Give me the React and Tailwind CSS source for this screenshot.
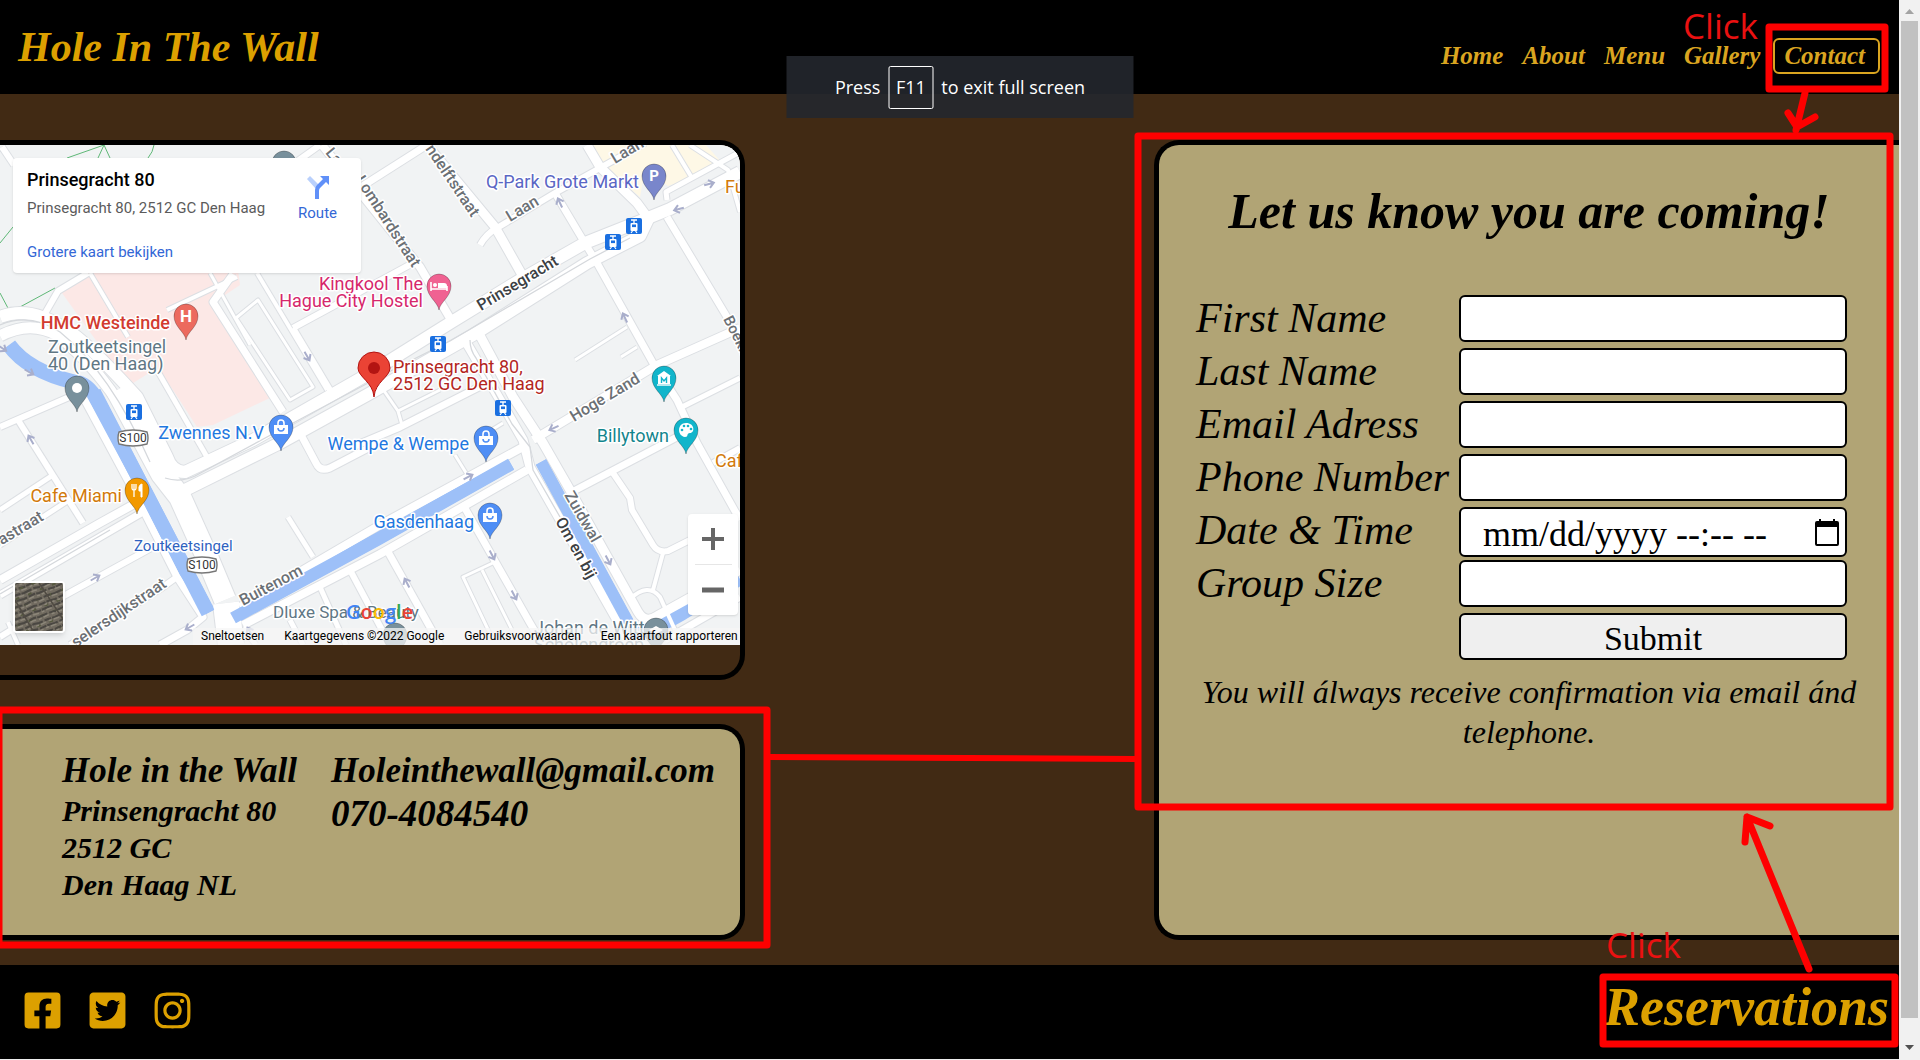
import React from "react";
import { FaFacebookSquare, FaTwitterSquare, FaInstagram } from "react-icons/fa";

const serif = "font-['Liberation_Serif',serif]";

/* ---------- map data ---------- */

const minorRoads = [
  ["M2 147 L14 165", 6],
  ["M0 427 L83 391", 6],
  ["M18 420 L83 523", 6],
  ["M0 510 L53 475", 5],
  ["M0 545 L69 500", 5],
  ["M0 580 L100 523 L138 502", 8],
  ["M0 595 L100 537 L143 512", 7],
  ["M40 609 L153 547", 6],
  ["M0 637 L24 622", 6],
  ["M8 622 L18 645", 4],
  ["M70 645 L163 587 L177 577", 6],
  ["M83 397 L133 490 L177 577 L203 617 L187 630 L160 645", 7],
  ["M43 317 L58 291 L88 273", 6],
  ["M90 273 L128 337", 4],
  ["M167 310 L237 277", 4],
  ["M233 274 L213 302 L283 412", 7],
  ["M157 370 L207 457", 5],
  ["M236 318 L258 300 L313 387 L290 400 L236 318", 3],
  ["M210 273 L250 345", 3],
  ["M257 273 L327 390", 4],
  ["M293 328 L413 263", 6],
  ["M293 328 L330 390", 6],
  ["M285 170 L320 145", 6],
  ["M322 145 L420 267 L454 325", 8],
  ["M361 187 L427 145", 7],
  ["M427 145 L495 227 L525 280", 9],
  ["M480 245 Q486 234 497 228 L555 193 L645 143", 6],
  ["M587 145 L600 167 L637 203 L648 218", 9],
  ["M555 193 L583 240 L597 263 L653 363 L677 400 L697 443 L740 520", 7],
  ["M667 217 L727 317 L740 340", 7],
  ["M667 200 L666 192 L740 152", 5],
  ["M672 145 L692 178", 4],
  ["M690 145 L728 170 L740 212", 4],
  ["M740 328 L657 365 L533 440", 8],
  ["M680 408 L740 378", 5],
  ["M570 493 L677 437", 7],
  ["M713 463 L740 448", 6],
  ["M613 473 L630 498 L632 510 L653 545 Q658 553 668 551 L740 515", 6],
  ["M663 553 L653 590 M630 599 Q648 582 660 597 L675 630", 4],
  ["M575 360 L627 327 M621 357 L637 347", 3],
  ["M300 433 L316 463 Q320 472 330 468 L380 442", 7],
  ["M350 448 L400 427 L483 385", 7],
  ["M402 425 L398 411 L380 385 M398 411 L440 390", 3],
  ["M455 455 L468 476 M480 437 L503 423", 3],
  ["M240 607 L380 525 L523 447", 8],
  ["M243 625 L380 554 L527 470", 8],
  ["M462 503 L530 623 L543 645", 7],
  ["M387 550 L440 645", 7],
  ["M288 517 L313 557", 5],
  ["M320 587 L346 645", 5],
  ["M350 570 L390 645", 6],
  ["M290 620 L303 645 M243 628 L256 645", 5],
  ["M493 640 L463 577 L495 562 M482 570 L512 630", 3],
  ["M665 640 L740 597", 7],
];

const mainRoads = [
  ["M0 317 Q30 305 67 330 Q85 340 137 397 L167 457 Q172 472 185 472 L253 440 L370 373 L450 323 L520 280 L585 243 L643 220 L670 209 L740 172", 12],
  ["M0 336 Q30 320 57 335 Q90 360 117 400 L160 475", 11],
  ["M117 390 L162 474 L180 497 L207 557 L225 600", 22],
  ["M175 495 L280 443 L367 395 L473 335 L587 263 L640 236 L650 215", 12],
  ["M463 337 L500 400 L523 440 L530 467 L617 620 L630 645", 9],
  ["M477 330 L513 397 L543 443 L570 490 L638 612 Q645 624 657 616 L740 570", 9],
  ["M226 603 L231 645", 26],
];

const medianLines = [
  "M165 478 Q180 483 195 476 L280 430 L400 366 L450 341 L590 259 L630 238",
  "M470 340 Q470 350 476 358 L512 424 L530 447 L533 470 L560 517",
  "M110 530 L0 594",
  "M0 325 Q30 312 60 332 Q110 372 150 462",
];

const streetLabels = [
  ["La", 325, 153, 50, 15],
  ["Lombardstraat", 355, 180, 57, 16],
  ["ndelftstraat", 425, 149, 56, 16],
  ["Laan", 510, 222, -31, 16],
  ["Laan", 615, 164, -31, 16],
  ["Prinsegracht", 481, 311, -31, 16, "#3c4043"],
  ["Hoge Zand", 574, 422, -31, 16],
  ["Boekh", 723, 319, 63, 15],
  ["Zuidwal", 564, 495, 60, 16],
  ["Om en bij", 555, 521, 61, 16, "#3c4043"],
  ["Buitenom", 243, 606, -28, 16],
  ["pastraat", -6, 550, -31, 16],
  ["selersdijkstraat", 76, 648, -34, 16],
];

const poiLabels = [
  ["Q-Park Grote Markt", 639, 188, "end", "#5a66c4", 18],
  ["Fu", 725, 193, "start", "#d27a0b", 18],
  ["Kingkool The", 423, 290, "end", "#d6276c", 18],
  ["Hague City Hostel", 423, 307, "end", "#d6276c", 18],
  ["HMC Westeinde", 170, 329, "end", "#d23b30", 18, 500],
  ["Zoutkeetsingel", 48, 353, "start", "#5f7784", 18],
  ["40 (Den Haag)", 48, 370, "start", "#5f7784", 18],
  ["Prinsegracht 80,", 393, 373, "start", "#b3261e", 18],
  ["2512 GC Den Haag", 393, 390, "start", "#b3261e", 18],
  ["Zwennes N.V", 264, 439, "end", "#1f78e0", 18],
  ["Wempe & Wempe", 469, 450, "end", "#1f78e0", 18],
  ["Gasdenhaag", 474, 528, "end", "#1f78e0", 18],
  ["Billytown", 669, 442, "end", "#12858d", 18],
  ["Caf", 715, 467, "start", "#d27a0b", 18],
  ["Cafe Miami", 122, 502, "end", "#d27a0b", 18],
  ["Zoutkeetsingel", 134, 551, "start", "#2f62c0", 15],
  ["Dluxe Spa & Beauty", 273, 618, "start", "#5f7784", 17],
  ["Johan de Witt", 534, 634, "start", "#5f7784", 18],
  ["Scholengroep", 534, 651, "start", "#5f7784", 18],
];

function Pin({ x, y, fill, children }) {
  return (
    <g transform={`translate(${x} ${y})`}>
      <path
        d="M0 24 C-1 16 -12 11 -12 0 A12 12 0 0 1 12 0 C12 11 1 16 0 24Z"
        fill={fill}
        stroke="#00000040"
        strokeWidth="1"
      />
      {children}
    </g>
  );
}

function Bag() {
  return (
    <g>
      <path d="M-7 -2h14v9h-14z" fill="#fff" />
      <path d="M-3 -2v-2a3 3 0 0 1 6 0v2" fill="none" stroke="#fff" strokeWidth="1.6" />
      <path d="M-3 1a3 3 0 0 0 6 0" fill="none" stroke="#4f8ef5" strokeWidth="1.5" />
    </g>
  );
}

function Tram({ x, y }) {
  return (
    <g transform={`translate(${x} ${y})`}>
      <rect x="-8" y="-8" width="16" height="16" rx="2" fill="#1a6fe0" />
      <path d="M-3 -6h6M0 -6v3" stroke="#fff" strokeWidth="1.3" />
      <rect x="-3.5" y="-3" width="7" height="8" rx="1" fill="#fff" />
      <rect x="-2" y="-1.5" width="4" height="2.6" fill="#1a6fe0" />
      <path d="M-3 7l1.5-2M3 7l-1.5-2" stroke="#fff" strokeWidth="1.2" />
    </g>
  );
}

function Shield({ x, y }) {
  return (
    <g transform={`translate(${x} ${y})`}>
      <path d="M-14 -6 Q0 -10 14 -6 Q16 0 14 6 Q0 10 -14 6 Q-16 0 -14 -6Z" fill="#fff" stroke="#777" strokeWidth="1.4" />
      <text y="4" textAnchor="middle" fontSize="12" fill="#333">S100</text>
    </g>
  );
}

function Arrow({ x, y, r }) {
  return (
    <path
      d="M-5 0H4M0 -4L5 0L0 4"
      fill="none"
      stroke="#a9aecb"
      strokeWidth="2"
      transform={`translate(${x} ${y}) rotate(${r})`}
    />
  );
}

function MapDrawing() {
  return (
    <svg
      viewBox="0 145 740 500"
      preserveAspectRatio="xMinYMin slice"
      className="block h-full w-full font-[Roboto,sans-serif]"
      role="img"
      aria-label="Prinsegracht 80, Den Haag"
    >
      <rect x="0" y="145" width="740" height="500" fill="#f1f3f4" />
      <path d="M592 145H706L722 163L690 178L668 186L645 170L640 197L600 163Z" fill="#fef8e6" />
      <path d="M88 270H238L240 285L213 303L270 393L272 397L213 425L197 427L173 390L157 368L130 385L110 360L62 293Z" fill="#fce8e6" />
      <g fill="none" stroke="#5fb877" strokeWidth="1">
        <path d="M67 158L104 145L98 158M104 145L110 158M154 145Q153 152 148 158M0 243L13 227M0 293L9 310L20 307L55 288" />
      </g>
      <g fill="none" strokeLinejoin="round">
        <g stroke="#dcdfe3">
          {minorRoads.map(([d, w]) => <path key={d} d={d} strokeWidth={w + 2} />)}
          {mainRoads.map(([d, w]) => <path key={d} d={d} strokeWidth={w + 2} />)}
        </g>
        <g stroke="#9dc0f8">
          <path d="M9 345Q28 371 74 382Q88 383 98 402L208 613" strokeWidth="15" />
          <path d="M233 618L378 539L511 464" strokeWidth="13" />
          <path d="M541 462L628 622" strokeWidth="12" />
          <path d="M628 632Q655 632 690 609L740 579" strokeWidth="13" />
        </g>
        <g stroke="#fff">
          {minorRoads.map(([d, w]) => <path key={d} d={d} strokeWidth={w} />)}
          {mainRoads.map(([d, w]) => <path key={d} d={d} strokeWidth={w} />)}
        </g>
        <path d="M233 618L378 539L511 464" stroke="#9dc0f8" strokeWidth="12" />
        <path d="M94 392L208 613" stroke="#9dc0f8" strokeWidth="14" />
        <path d="M541 462L628 622" stroke="#9dc0f8" strokeWidth="11" />
        <g stroke="#d5d8dc" strokeWidth="1.3">
          {medianLines.map((d) => <path key={d} d={d} />)}
        </g>
      </g>

      <Arrow x="31" y="440" r="-120" /><Arrow x="2" y="348" r="35" /><Arrow x="29" y="372" r="30" />
      <Arrow x="307" y="356" r="60" /><Arrow x="95" y="578" r="-30" /><Arrow x="190" y="627" r="150" />
      <Arrow x="250" y="632" r="-120" /><Arrow x="560" y="203" r="-115" /><Arrow x="625" y="318" r="-115" />
      <Arrow x="709" y="184" r="-15" /><Arrow x="679" y="209" r="165" /><Arrow x="554" y="428" r="155" />
      <Arrow x="468" y="477" r="-28" /><Arrow x="492" y="555" r="62" /><Arrow x="514" y="595" r="62" />
      <Arrow x="407" y="583" r="-118" /><Arrow x="608" y="560" r="62" />

      <Tram x="634" y="226" /><Tram x="613" y="242" /><Tram x="438" y="344" />
      <Tram x="503" y="408" /><Tram x="134" y="412" />
      <Shield x="133" y="438" /><Shield x="202" y="565" />

      <g stroke="#fff" strokeWidth="3" strokeLinejoin="round" paintOrder="stroke">
        {streetLabels.map(([t, x, y, r, s, c]) => (
          <text key={t + x} fontSize={s} fill={c || "#6b7075"} fontWeight="500" transform={`translate(${x} ${y}) rotate(${r})`}>{t}</text>
        ))}
        {poiLabels.map(([t, x, y, a, c, s, w]) => (
          <text key={t + y} x={x} y={y} textAnchor={a} fontSize={s} fill={c} fontWeight={w || 400}>{t}</text>
        ))}
      </g>

      <Pin x="284" y="163" fill="#78909c" />
      <Pin x="654" y="176" fill="#7986cb">
        <text y="5" textAnchor="middle" fontSize="15" fontWeight="700" fill="#fff">P</text>
      </Pin>
      <Pin x="439" y="286" fill="#f06292">
        <path d="M-8 -4v9M-8 3h16M8 5v-5" stroke="#fff" strokeWidth="1.6" />
        <path d="M-1 2v-5h6q3 0 3 3v2z" fill="#fff" />
        <circle cx="-4" cy="-1" r="2" fill="#fff" />
      </Pin>
      <Pin x="186" y="316" fill="#ec6a5e">
        <text y="6" textAnchor="middle" fontSize="17" fontWeight="700" fill="#fff">H</text>
      </Pin>
      <Pin x="77" y="388" fill="#78909c"><circle r="5" fill="#fff" /></Pin>
      <Pin x="281" y="427" fill="#4f8ef5"><Bag /></Pin>
      <Pin x="486" y="438" fill="#4f8ef5"><Bag /></Pin>
      <Pin x="490" y="515" fill="#4f8ef5"><Bag /></Pin>
      <Pin x="137" y="490" fill="#f29900">
        <path d="M-5 -6v4q0 2 2 2v7M-3 -6v6M-1 -6v4q0 2 -2 2" fill="none" stroke="#fff" strokeWidth="1.3" />
        <path d="M2 1v-4q1 -3 3 -3v13h-1v-6z" fill="#fff" stroke="#fff" />
      </Pin>
      <Pin x="664" y="378" fill="#12b5cb">
        <path d="M-7 -2L0 -7L7 -2ZM-6 -2h12v8h-12z" fill="#fff" />
        <path d="M-2.5 5v-5l2.5 3l2.5 -3v5" fill="none" stroke="#12b5cb" strokeWidth="1.4" />
        <path d="M-7 7h14" stroke="#fff" strokeWidth="1.4" />
      </Pin>
      <Pin x="686" y="430" fill="#12b5cb">
        <path d="M0 -7C9 -7 9 3 4 3C0 3 3 7 -1 7C-9 6 -9 -7 0 -7Z" fill="#fff" />
        <g fill="#12b5cb"><circle cx="-4" cy="0" r="1.3" /><circle cx="-2" cy="-4" r="1.3" /><circle cx="2" cy="-4" r="1.3" /><circle cx="5" cy="-1" r="1.3" /></g>
      </Pin>
      <Pin x="395" y="635" fill="#78909c" />
      <Pin x="656" y="630" fill="#78909c">
        <path d="M-7 0L0 -4L7 0L0 4Z" fill="#fff" />
      </Pin>

      <path d="M374 397C373 382 358 377 358 368A16 16 0 0 1 390 368C390 377 375 382 374 397Z" fill="#ea4335" stroke="#b31412" />
      <circle cx="374" cy="368" r="6" fill="#b31412" />
    </svg>
  );
}

function SatelliteThumb() {
  const rows = Array.from({ length: 13 }, (_, i) => i);
  return (
    <svg viewBox="0 0 48 48" className="block h-full w-full" aria-hidden="true">
      <rect width="48" height="48" fill="#716b60" />
      {rows.map((i) => (
        <g key={i} fill="none">
          <path d={`M-4 ${i * 6 + 2}l9 -3l4 -1l10 -5l5 -1l9 -4l7 -2l12 -6`} stroke="#4a4742" strokeWidth="2" strokeDasharray="11 2 7 1" strokeDashoffset={i * 5} />
          <path d={`M-4 ${i * 6 + 5}l8 -3l6 -2l8 -4l7 -2l8 -4l17 -6`} stroke="#8c8679" strokeWidth="1.5" strokeDasharray="6 3 3 2" strokeDashoffset={i * 3} />
          <path d={`M-4 ${i * 9}l16 -6l14 -6l26 -10`} stroke="#55583f" strokeWidth="2" strokeDasharray="4 9" strokeDashoffset={i * 4} />
        </g>
      ))}
      <path d="M0 17L18 48M24 0L48 36" stroke="#504b43" strokeWidth="1.5" />
    </svg>
  );
}

function MapPanel() {
  return (
    <div className="relative h-[500px] overflow-hidden rounded-tr-[20px] bg-[#f1f3f4] font-[Roboto,sans-serif]">
      <MapDrawing />

      <div className="absolute left-[13px] top-[13px] flex h-[115px] w-[348px] justify-between rounded-sm bg-white pl-[14px] pr-6 pt-3 shadow">
        <div className="flex flex-col items-start text-[15px] leading-5">
          <h2 className="text-[18px] font-medium leading-5 text-black">Prinsegracht 80</h2>
          <p className="mt-2 text-[#5b5b5b]">Prinsegracht 80, 2512 GC Den Haag</p>
          <a href="#kaart" className="mt-6 text-[#3367d6]">Grotere kaart bekijken</a>
        </div>
        <a href="#route" className="flex flex-col items-center pt-[5px] text-[15px] leading-5 text-[#3367d6]">
          <svg viewBox="0 0 24 24" className="mb-1 h-6 w-6" aria-hidden="true">
            <path d="M1 4L4 1L13 10L10 14Z" fill="#b9d0fc" />
            <path d="M9 24V15Q9 12 11 10L17 4L14 1H23V10L20 7L14 13Q13 14 13 16V24Z" fill="#6090f8" />
          </svg>
          Route
        </a>
      </div>

      <div className="absolute right-[2px] top-[369px] flex h-[101px] w-[50px] flex-col items-center rounded-sm bg-white shadow">
        <button type="button" aria-label="Inzoomen" className="flex w-full flex-1 items-center justify-center">
          <svg viewBox="0 0 22 22" className="h-[22px] w-[22px]"><path d="M0 11H22M11 0V22" stroke="#666" strokeWidth="4" /></svg>
        </button>
        <span className="h-px w-[37px] bg-[#e6e6e6]" />
        <button type="button" aria-label="Uitzoomen" className="flex w-full flex-1 items-center justify-center">
          <svg viewBox="0 0 22 22" className="h-[22px] w-[22px]"><path d="M0 11H22" stroke="#666" strokeWidth="5" /></svg>
        </button>
      </div>

      <button type="button" aria-label="Satelliet" className="absolute bottom-3 left-[13px] h-[52px] w-[52px] overflow-hidden rounded-sm border-2 border-white shadow-md">
        <SatelliteThumb />
      </button>

      <div className="absolute bottom-[19px] left-[346px] font-['Open_Sans',sans-serif] text-[20px] font-semibold leading-7" aria-label="Google">
        <span className="text-[#4285f4]">G</span><span className="text-[#ea4335]">o</span><span className="text-[#fbbc05]">o</span><span className="text-[#4285f4]">g</span><span className="text-[#34a853]">l</span><span className="text-[#ea4335]">e</span>
      </div>

      <div className="absolute bottom-0 right-0 flex h-[17px] w-[547px] gap-5 overflow-hidden whitespace-nowrap bg-[#f5f5f5]/75 pl-2 text-[12px] leading-[17px] text-black">
        <button type="button">Sneltoetsen</button>
        <span>Kaartgegevens ©2022 Google</span>
        <a href="#voorwaarden">Gebruiksvoorwaarden</a>
        <a href="#fout">Een kaartfout rapporteren</a>
      </div>
    </div>
  );
}

/* ---------- page parts ---------- */

function Header() {
  return (
    <header className="flex h-[94px] items-center justify-between bg-black pl-[18px] pr-[19px]">
      <h1 className="text-[42px] font-bold italic text-[#dca000]">Hole In The Wall</h1>
      <nav className="flex items-center gap-[19px] pt-[18px] text-[25px] font-bold italic leading-8 text-[#daa520]">
        <a href="#home">Home</a>
        <a href="#about">About</a>
        <a href="#menu">Menu</a>
        <a href="#gallery">Gallery</a>
        <a href="#contact" className="ml-[-6px] rounded-md border-2 border-[#daa520] pl-[9px] pr-[13px]">Contact</a>
      </nav>
    </header>
  );
}

const fieldBox = "rounded-[6px] border-2 border-black";

function Field({ id, label }) {
  return (
    <div className="flex h-[53px] justify-between">
      <label htmlFor={id} className="text-[42px] italic leading-[47px]">{label}</label>
      <input id={id} type="text" className={`${fieldBox} h-[47px] w-[388px] bg-white px-5 text-[35px]`} />
    </div>
  );
}

function DateField({ id, label }) {
  return (
    <div className="flex h-[53px] justify-between">
      <label htmlFor={id} className="text-[42px] italic leading-[47px]">{label}</label>
      <div className={`${fieldBox} flex h-[50px] w-[388px] items-center bg-white pl-[22px] pr-[6px]`}>
        <input
          id={id}
          type="text"
          placeholder="mm/dd/yyyy --:-- --"
          className="h-full min-w-0 flex-1 bg-transparent pt-1 text-[36px] placeholder:text-black placeholder:opacity-100"
        />
        <button type="button" aria-label="Pick a date" className="shrink-0">
          <svg viewBox="0 0 24 27" className="h-[27px] w-6" aria-hidden="true">
            <path d="M4 0H6V2H18V0H20V2H22Q24 2 24 4V25Q24 27 22 27H2Q0 27 0 25V4Q0 2 2 2H4ZM2 8V25H22V8Z" fill="#000" fillRule="evenodd" />
          </svg>
        </button>
      </div>
    </div>
  );
}

function ReservationForm() {
  return (
    <form className="w-[745px] rounded-l-[25px] border-[5px] border-r-0 border-black bg-[#b1a475] pt-9 text-black">
      <h2 className="text-center text-[50px] font-bold italic leading-[60px]">Let us know you are coming!</h2>
      <div className="mt-[54px] pl-[37px] pr-[52px]">
        <Field id="first" label="First Name" />
        <Field id="last" label="Last Name" />
        <Field id="email" label="Email Adress" />
        <Field id="phone" label="Phone Number" />
        <DateField id="date" label="Date & Time" />
        <Field id="size" label="Group Size" />
        <div className="flex justify-end">
          <button type="submit" className={`${fieldBox} h-[47px] w-[388px] bg-[#efefef] pt-1 text-[34px] leading-[39px]`}>Submit</button>
        </div>
      </div>
      <p className="mt-3 text-center text-[32px] italic leading-10">
        You will álways receive confirmation via email ánd telephone.
      </p>
    </form>
  );
}

function AddressCard() {
  return (
    <address className="flex h-[216px] gap-[34px] rounded-r-[25px] border-[5px] border-l-0 border-black bg-[#b1a475] pl-[62px] pt-5 font-bold italic text-black">
      <div className="text-[30px] leading-[37px]">
        <p className="text-[35px] leading-[43px]">Hole in the Wall</p>
        <p>Prinsengracht 80</p>
        <p>2512 GC</p>
        <p>Den Haag NL</p>
      </div>
      <div className="leading-[43px]">
        <p className="text-[35px]">Holeinthewall@gmail.com</p>
        <p className="text-[37px]">070-4084540</p>
      </div>
    </address>
  );
}

function Footer() {
  return (
    <footer className="flex h-[94px] items-center justify-between bg-black pl-[22px] pr-[10px] text-[#dca000]">
      <div className="flex gap-6 pb-1 text-[41px]">
        <a href="#facebook" aria-label="Facebook"><FaFacebookSquare /></a>
        <a href="#twitter" aria-label="Twitter"><FaTwitterSquare /></a>
        <a href="#instagram" aria-label="Instagram"><FaInstagram /></a>
      </div>
      <a href="#reservations" className="pb-[10px] text-[54px] font-bold italic leading-[60px]">Reservations</a>
    </footer>
  );
}

function PageScrollbar() {
  return (
    <div className="flex w-[21px] shrink-0 flex-col items-center bg-[#f1f1f1]" aria-hidden="true">
      <svg viewBox="0 0 21 21" className="h-[21px] w-[21px]"><path d="M6 14L10.5 9L15 14Z" fill="#a3a3a3" /></svg>
      <div className="w-[17px] flex-1 bg-[#c1c1c1]" />
      <svg viewBox="0 0 21 42" className="h-[42px] w-[21px]"><path d="M6 27L10.5 32L15 27Z" fill="#505050" /></svg>
    </div>
  );
}

function FullScreenNotice() {
  return (
    <div className="absolute left-1/2 top-14 flex h-[62px] w-[347px] -translate-x-1/2 items-center justify-center gap-2 bg-[#24272e]/90 font-['Open_Sans',sans-serif] text-[18px] text-white">
      <span>Press</span>
      <kbd className="flex h-[43px] w-[45px] items-center justify-center rounded-xs border border-white font-['Open_Sans',sans-serif] text-[18px]">F11</kbd>
      <span>to exit full screen</span>
    </div>
  );
}

function Annotations() {
  return (
    <svg
      viewBox="0 0 1920 1060"
      className="pointer-events-none absolute left-0 top-0 h-[1060px] w-[1920px] font-['Open_Sans',sans-serif]"
      aria-hidden="true"
    >
      <g fill="none" stroke="#fe0000" strokeWidth="7" strokeLinecap="round" strokeLinejoin="round">
        <rect x="1769" y="27" width="116" height="62" />
        <path d="M1805 93L1796 130M1788 113L1797 127L1815 117" />
        <rect x="1138" y="136" width="752" height="671" />
        <rect x="-1" y="710" width="768" height="235" />
        <path d="M768 757L1136 759" strokeWidth="6" />
        <path d="M1809 969L1747 817M1745 842L1747 817L1770 826" />
        <rect x="1603" y="977" width="292" height="67" />
      </g>
      <g fill="#ea1111" fontSize="35">
        <text x="1683" y="39">Click</text>
        <text x="1606" y="958">Click</text>
      </g>
    </svg>
  );
}

export default function App() {
  return (
    <div className={`relative flex min-h-screen overflow-hidden ${serif}`}>
      <div className="flex min-w-0 flex-1 flex-col border-b border-[#eeeeee] bg-[#412a14]">
        <Header />
        <main className="flex flex-1 justify-between pb-[25px] pt-[46px]">
          <section className="flex w-[745px] flex-col gap-11">
            <div className="rounded-r-[25px] border-[5px] border-l-0 border-black pb-[30px]">
              <MapPanel />
            </div>
            <AddressCard />
          </section>
          <ReservationForm />
        </main>
        <Footer />
      </div>
      <PageScrollbar />
      <FullScreenNotice />
      <Annotations />
    </div>
  );
}
